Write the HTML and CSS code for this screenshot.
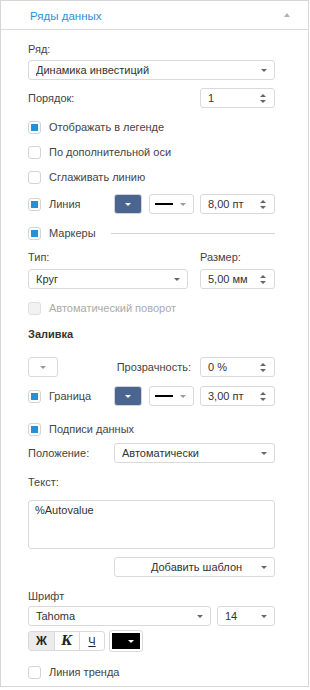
FILE: index.html
```html
<!DOCTYPE html>
<html lang="ru">
  <head>
    <meta charset="UTF-8" />
    <title>Ряды данных</title>
    <link rel="stylesheet" href="styles.css">
  </head>
  <body>
    <div class="panel">
      <div class="panel-header">
        <span class="panel-title">Ряды данных</span>
        <span class="collapse-arrow"></span>
      </div>

      <div class="panel-body">
        <div class="label m11">Ряд:</div>
        <div class="select m3">
          <span class="select-text">Динамика инвестиций</span>
          <span class="arrow"></span>
        </div>

        <div class="row m8">
          <span class="label grow">Порядок:</span>
          <div class="spin w75">
            <span class="select-text">1</span>
            <span class="spin-arrows"><i class="up"></i><i class="down"></i></span>
          </div>
        </div>

        <label class="check m10"><span class="box on"></span>Отображать в легенде</label>
        <label class="check m7"><span class="box"></span>По дополнительной оси</label>
        <label class="check m7"><span class="box"></span>Сглаживать линию</label>

        <div class="row m8">
          <label class="check grow"><span class="box on"></span>Линия</label>
          <div class="color-btn"><span class="arrow white"></span></div>
          <div class="line-btn"><span class="line-sample"></span><span class="arrow light"></span></div>
          <div class="spin w75">
            <span class="select-text">8,00 пт</span>
            <span class="spin-arrows"><i class="up"></i><i class="down"></i></span>
          </div>
        </div>

        <div class="row m10">
          <label class="check"><span class="box on"></span>Маркеры</label>
          <span class="separator"></span>
        </div>

        <div class="row m6">
          <span class="label grow">Тип:</span>
          <span class="label w75">Размер:</span>
        </div>
        <div class="row m3">
          <div class="select grow">
            <span class="select-text">Круг</span>
            <span class="arrow"></span>
          </div>
          <div class="spin w75">
            <span class="select-text">5,00 мм</span>
            <span class="spin-arrows"><i class="up"></i><i class="down"></i></span>
          </div>
        </div>

        <label class="check disabled m10"><span class="box"></span>Автоматический поворот</label>

        <div class="section-title m9">Заливка</div>

        <div class="row m15">
          <div class="fill-btn"><span class="arrow light"></span></div>
          <span class="label grow right">Прозрачность:</span>
          <div class="spin w75">
            <span class="select-text">0 %</span>
            <span class="spin-arrows"><i class="up"></i><i class="down"></i></span>
          </div>
        </div>

        <div class="row m9">
          <label class="check grow"><span class="box on"></span>Граница</label>
          <div class="color-btn"><span class="arrow white"></span></div>
          <div class="line-btn"><span class="line-sample"></span><span class="arrow light"></span></div>
          <div class="spin w75">
            <span class="select-text">3,00 пт</span>
            <span class="spin-arrows"><i class="up"></i><i class="down"></i></span>
          </div>
        </div>

        <label class="check m14"><span class="box on"></span>Подписи данных</label>

        <div class="row m5">
          <span class="label w86">Положение:</span>
          <div class="select grow">
            <span class="select-text">Автоматически</span>
            <span class="arrow"></span>
          </div>
        </div>

        <div class="label m11">Текст:</div>
        <div class="textarea m10">%Autovalue</div>

        <div class="row m8">
          <span class="w86"></span>
          <div class="select grow center">
            <span class="select-text">Добавить шаблон</span>
            <span class="arrow"></span>
          </div>
        </div>

        <div class="label m11">Шрифт</div>
        <div class="row m2">
          <div class="select grow">
            <span class="select-text">Tahoma</span>
            <span class="arrow"></span>
          </div>
          <div class="select w58">
            <span class="select-text">14</span>
            <span class="arrow"></span>
          </div>
        </div>

        <div class="row m5">
          <div class="style-group">
            <span class="style-btn bold pressed">Ж</span>
            <span class="style-btn italic">К</span>
            <span class="style-btn underline">Ч</span>
          </div>
          <div class="font-color"><span class="arrow white"></span></div>
        </div>

        <label class="check m12"><span class="box"></span>Линия тренда</label>
      </div>
    </div>
  </body>
</html>
```

FILE: styles.css
```css
* {
  margin: 0;
  padding: 0;
  box-sizing: border-box;
}

body {
  width: 310px;
  background: #fff;
  font-family: "Liberation Sans", Tahoma, sans-serif;
  font-size: 11px;
  color: #444;
}

.panel {
  width: 309px;
  border: 1px solid #d6d6d6;
  padding-bottom: 5px;
}

.panel-header {
  height: 29px;
  border-bottom: 1px solid #dcdcdc;
  display: flex;
  align-items: center;
  padding: 0 18px 0 29px;
}

.panel-title {
  flex: 1;
  color: #2f90d8;
  font-size: 11.5px;
  margin-top: 1px;
}

.collapse-arrow {
  width: 0;
  height: 0;
  border-left: 3px solid transparent;
  border-right: 3px solid transparent;
  border-bottom: 4px solid #b3b3b3;
}

.panel-body {
  padding: 0 33px 0 27px;
  display: flex;
  flex-direction: column;
}

.m2 { margin-top: 2px; }
.m3 { margin-top: 3px; }
.m5 { margin-top: 5px; }
.m6 { margin-top: 6px; }
.m7 { margin-top: 7px; }
.m8 { margin-top: 8px; }
.m9 { margin-top: 9px; }
.m10 { margin-top: 10px; }
.m11 { margin-top: 11px; }
.m12 { margin-top: 12px; }
.m14 { margin-top: 14px; }
.m15 { margin-top: 15px; }

.label {
  height: 16px;
  line-height: 16px;
  white-space: nowrap;
}

.row {
  display: flex;
  align-items: center;
  min-height: 18px;
}

.grow {
  flex: 1;
  min-width: 0;
}

.right {
  text-align: right;
  margin-right: -3px;
}

.w75 {
  width: 75px;
  flex: none;
}

.w86 {
  width: 86px;
  flex: none;
}

.w58 {
  width: 58px;
  flex: none;
  margin-left: 6px;
}

.row .select.grow + .w75 {
  margin-left: 12px;
}

.row .label.grow + .w75 {
  margin-left: 12px;
}

.select,
.spin {
  height: 20px;
  border: 1px solid #d9d9d9;
  border-radius: 3px;
  background: #fff;
  display: flex;
  align-items: center;
  padding: 0 7px 0 7px;
  color: #333;
}

.select-text {
  flex: 1;
  white-space: nowrap;
  overflow: hidden;
}

.select.center .select-text {
  text-align: center;
  padding-left: 10px;
}

.arrow {
  width: 0;
  height: 0;
  border-left: 3px solid transparent;
  border-right: 3px solid transparent;
  border-top: 3px solid #666;
  margin-top: 1px;
}

.arrow.white {
  border-top-color: #fff;
}

.arrow.light {
  border-top-color: #999;
}

.spin-arrows {
  display: flex;
  flex-direction: column;
  gap: 3px;
  margin-right: 1px;
}

.spin-arrows i {
  width: 0;
  height: 0;
  border-left: 3px solid transparent;
  border-right: 3px solid transparent;
}

.spin-arrows .up {
  border-bottom: 3px solid #666;
}

.spin-arrows .down {
  border-top: 3px solid #666;
}

.check {
  display: flex;
  align-items: center;
  height: 18px;
  white-space: nowrap;
}

.box {
  width: 13px;
  height: 13px;
  border: 1px solid #d4d4d4;
  border-radius: 3px;
  background: #fff;
  margin-right: 8px;
  position: relative;
  flex: none;
}

.box.on::after {
  content: "";
  position: absolute;
  left: 2px;
  top: 2px;
  width: 7px;
  height: 7px;
  background: #2a8ed3;
}

.check.disabled {
  color: #aaa;
}

.check.disabled .box {
  background: #f2f2f2;
  border-color: #e0e0e0;
}

.color-btn {
  width: 28px;
  height: 20px;
  border: 1px solid #d4d4d4;
  border-radius: 3px;
  background: #4a6690;
  display: flex;
  align-items: center;
  justify-content: center;
  flex: none;
}

.line-btn {
  width: 45px;
  height: 20px;
  border: 1px solid #d9d9d9;
  border-radius: 3px;
  display: flex;
  align-items: center;
  padding: 0 7px 0 5px;
  margin: 0 6px 0 7px;
  flex: none;
}

.line-sample {
  flex: 1;
  height: 2px;
  background: #000;
  margin-right: 7px;
}

.separator {
  flex: 1;
  height: 1px;
  background: #d4d4d4;
  margin-left: 15px;
}

.section-title {
  font-weight: bold;
  color: #333;
  height: 16px;
  line-height: 16px;
}

.fill-btn {
  width: 30px;
  height: 20px;
  border: 1px solid #d9d9d9;
  border-radius: 3px;
  display: flex;
  align-items: center;
  justify-content: center;
  flex: none;
}

.textarea {
  height: 49px;
  border: 1px solid #d9d9d9;
  border-radius: 3px;
  padding: 3px 6px;
  color: #333;
}

.style-group {
  display: flex;
  height: 20px;
  border: 1px solid #d9d9d9;
  border-radius: 3px;
  overflow: hidden;
}

.style-btn {
  width: 25px;
  display: flex;
  align-items: center;
  justify-content: center;
  color: #222;
  font-size: 12px;
  border-left: 1px solid #d9d9d9;
}

.style-btn:first-child {
  border-left: none;
}

.style-btn.pressed {
  background: #ececec;
}

.style-btn.bold {
  font-weight: bold;
}

.style-btn.italic {
  font-family: "DejaVu Serif", "Liberation Serif", serif;
  font-style: italic;
  font-weight: bold;
}

.style-btn.underline {
  text-decoration: underline;
  font-size: 11px;
}

.font-color {
  width: 32px;
  height: 20px;
  margin-left: 5px;
  border: 2px solid #fff;
  outline: 1px solid #d9d9d9;
  border-radius: 2px;
  background: #000;
  display: flex;
  align-items: center;
  justify-content: flex-end;
  padding-right: 6px;
}
```
